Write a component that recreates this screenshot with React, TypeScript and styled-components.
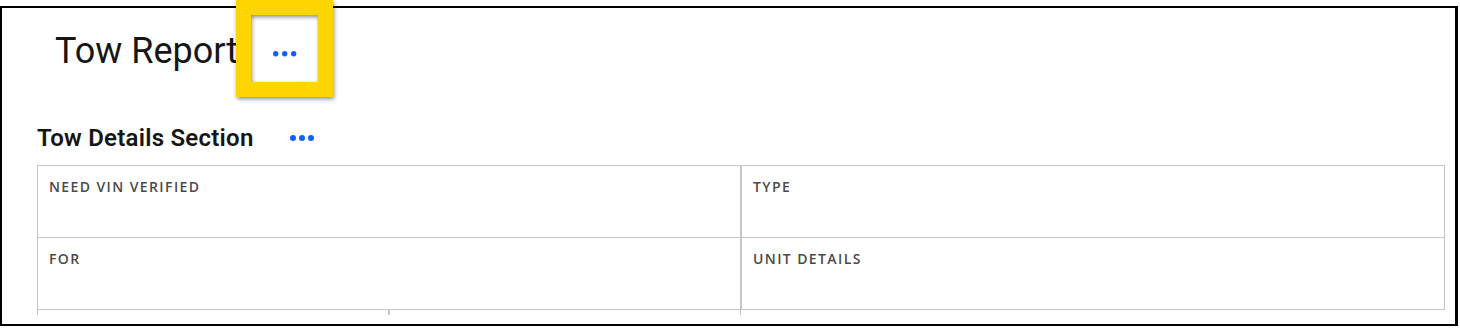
import React from "react";
import styled, { createGlobalStyle } from "styled-components";

const GlobalStyle = createGlobalStyle`
  html, body {
    margin: 0;
    padding: 0;
    background: #ffffff;
  }
  body {
    font-family: Roboto, "Liberation Sans", Arial, sans-serif;
    color: #161616;
  }
  * { box-sizing: border-box; }
`;

const Frame = styled.div`
  margin-top: 6px;
  width: 1458px;
  height: 320px;
  border-style: solid;
  border-color: #000;
  border-width: 2px 3px 2px 2px;
  background: #fff;
  padding: 0 0 0 35px;
`;

const PageHeader = styled.header`
  display: flex;
  align-items: flex-start;
  padding-top: 23px;
  height: 63px;
`;

const PageTitle = styled.h1`
  margin: 0 0 0 18px;
  font-size: 36px;
  line-height: 40px;
  font-weight: 400;
  color: #161616;
  letter-spacing: 0;
`;

const OverflowButton = styled.button<{ $size: number }>`
  position: relative;
  display: flex;
  align-items: center;
  justify-content: center;
  width: ${(p) => p.$size}px;
  height: ${(p) => p.$size}px;
  padding: 0;
  border: none;
  background: transparent;
  cursor: pointer;
  color: #0f62fe;
`;

const TitleMenuButton = styled(OverflowButton)`
  margin-left: 31px;
  margin-top: 7px;
`;

const Highlight = styled.span`
  position: absolute;
  left: -33px;
  top: -38px;
  width: 97px;
  height: 97px;
  border: 15px solid #ffd500;
  filter: drop-shadow(1px 2px 2px rgba(0, 0, 0, 0.45));
  pointer-events: none;
  z-index: 2;
`;

const SectionHeader = styled.div`
  display: flex;
  align-items: center;
  gap: 34px;
  margin-top: 53px;
  height: 28px;
`;

const SectionTitle = styled.h2`
  margin: 0;
  font-size: 24px;
  line-height: 28px;
  font-weight: 600;
  letter-spacing: 0.25px;
  color: #161616;
`;

const TableClip = styled.div`
  margin-top: 13px;
  width: 1408px;
  height: 150px;
  overflow: hidden;
`;

const DetailRow = styled.div<{ $cols: number }>`
  display: grid;
  grid-template-columns: repeat(${(p) => p.$cols}, 1fr);
  height: 73px;
  & + & {
    margin-top: -1px;
  }
`;

const DetailCell = styled.div`
  border: 1px solid #c6c6c6;
  padding: 13px 11px 0;
`;

const Label = styled.div`
  font-family: "Open Sans", Roboto, "Liberation Sans", sans-serif;
  font-size: 14px;
  line-height: 16px;
  font-weight: 600;
  letter-spacing: 1.4px;
  text-transform: uppercase;
  color: #4a4a4a;
`;

const Dots: React.FC<{ r: number; gap: number }> = ({ r, gap }) => {
  const w = gap * 2 + r * 2 + 2;
  const h = r * 2 + 2;
  const cy = h / 2;
  const c0 = r + 1;
  return (
    <svg width={w} height={h} viewBox={`0 0 ${w} ${h}`} aria-hidden="true">
      <circle cx={c0} cy={cy} r={r} fill="currentColor" />
      <circle cx={c0 + gap} cy={cy} r={r} fill="currentColor" />
      <circle cx={c0 + gap * 2} cy={cy} r={r} fill="currentColor" />
    </svg>
  );
};

export default function App() {
  return (
    <>
      <GlobalStyle />
      <Frame>
        <PageHeader>
          <PageTitle>Tow Report</PageTitle>
          <TitleMenuButton $size={32} aria-label="More actions">
            <Dots r={2.7} gap={9} />
            <Highlight />
          </TitleMenuButton>
        </PageHeader>

        <SectionHeader>
          <SectionTitle>Tow Details Section</SectionTitle>
          <OverflowButton $size={28} aria-label="Section actions">
            <Dots r={3} gap={9} />
          </OverflowButton>
        </SectionHeader>

        <TableClip>
          <DetailRow $cols={2}>
            <DetailCell>
              <Label>Need VIN Verified</Label>
            </DetailCell>
            <DetailCell>
              <Label>Type</Label>
            </DetailCell>
          </DetailRow>
          <DetailRow $cols={2}>
            <DetailCell>
              <Label>For</Label>
            </DetailCell>
            <DetailCell>
              <Label>Unit Details</Label>
            </DetailCell>
          </DetailRow>
          <DetailRow $cols={4}>
            <DetailCell />
            <DetailCell />
          </DetailRow>
        </TableClip>
      </Frame>
    </>
  );
}
